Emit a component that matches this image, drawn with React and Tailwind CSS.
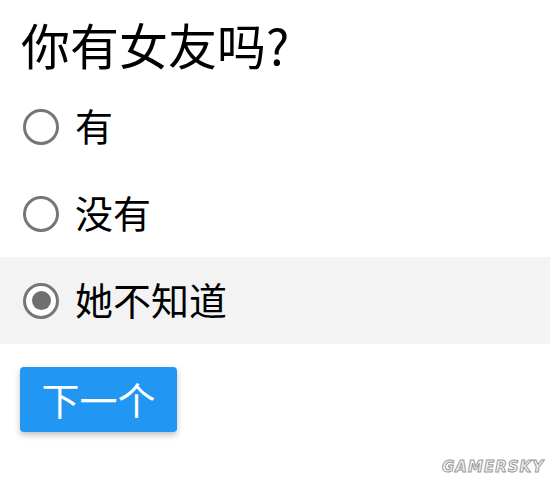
import React, { useState } from 'react';

const options = ['有', '没有', '她不知道'];

const Radio = ({ checked }) => (
  <span className="flex h-[36px] w-[36px] shrink-0 items-center justify-center rounded-full border-[3px] border-[#767676] bg-white">
    {checked && <span className="h-[19px] w-[19px] rounded-full bg-[#6f6f6f]" />}
  </span>
);

export default function App() {
  const [picked, setPicked] = useState(2);

  return (
    <div
      className="relative h-[483px] w-[550px] overflow-hidden bg-white text-black"
      style={{ fontFamily: '"Noto Sans CJK SC", "Noto Sans", sans-serif' }}
    >
      <div className="flex h-[83px] items-center pl-[21px] pt-[4px] text-[49px] leading-none">
        你有女友吗?
      </div>

      <div className="flex flex-col">
        {options.map((opt, i) => (
          <label
            key={opt}
            onClick={() => setPicked(i)}
            className={`flex h-[87px] cursor-pointer items-center gap-[16px] pl-[23px] ${
              picked === i ? 'bg-[#f3f3f3]' : ''
            }`}
          >
            <Radio checked={picked === i} />
            <span className="pb-[3px] text-[38px] leading-none">{opt}</span>
          </label>
        ))}
      </div>

      <div className="pl-[20px] pt-[23px]">
        <button className="flex h-[65px] w-[157px] items-center justify-center rounded-[4px] bg-[#2196f3] pb-[2px] text-[38px] leading-none text-white shadow-[0_3px_6px_rgba(0,0,0,0.25)]">
          下一个
        </button>
      </div>

      <div
        className="absolute bottom-[5px] right-[6px] text-[15px] font-black italic tracking-[1px] text-[#f4f4f4] [-webkit-text-stroke:1px_#9a9a9a]"
        style={{ fontFamily: '"DejaVu Sans", sans-serif' }}
      >
        GAMERSKY
      </div>
    </div>
  );
}
